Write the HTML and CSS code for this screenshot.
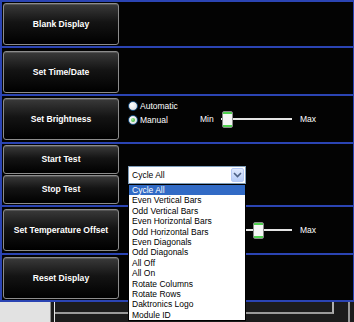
FILE: index.html
```html
<!DOCTYPE html>
<html lang="en">
<head>
    <meta charset="UTF-8">
    <title>Display Control</title>
    <link rel="stylesheet" href="styles.css">
</head>
<body>
    <div class="panel">
        <!-- Blank -->
        <div class="row r1">
            <button class="btn">Blank Display</button>
        </div>

        <!-- Time -->
        <div class="row r2">
            <button class="btn">Set Time/Date</button>
        </div>

        <!-- Brightness -->
        <div class="row r3">
            <button class="btn">Set Brightness</button>
            <div class="radios">
                <label class="radio"><span class="dot"></span>Automatic</label>
                <label class="radio"><span class="dot on"></span>Manual</label>
            </div>
            <div class="range">
                <span class="min">Min</span>
                <div class="slider"><span class="thumb" style="left: 1px"></span></div>
                <span class="max">Max</span>
            </div>
        </div>

        <!-- Test -->
        <div class="row r4">
            <div class="btn-stack">
                <button class="btn small">Start Test</button>
                <button class="btn small">Stop Test</button>
            </div>
            <div class="combo">
                <div class="combo-box">
                    <span class="combo-text">Cycle All</span>
                    <span class="combo-arrow">
                        <svg width="9" height="6" viewBox="0 0 9 6"><path d="M1 1 L4.5 4.5 L8 1" fill="none" stroke="#4d6185" stroke-width="1.6"/></svg>
                    </span>
                </div>
                <ul class="combo-list">
                    <li class="sel">Cycle All</li>
                    <li>Even Vertical Bars</li>
                    <li>Odd Vertical Bars</li>
                    <li>Even Horizontal Bars</li>
                    <li>Odd Horizontal Bars</li>
                    <li>Even Diagonals</li>
                    <li>Odd Diagonals</li>
                    <li>All Off</li>
                    <li>All On</li>
                    <li>Rotate Columns</li>
                    <li>Rotate Rows</li>
                    <li>Daktronics Logo</li>
                    <li>Module ID</li>
                </ul>
            </div>
        </div>

        <!-- Temperature -->
        <div class="row r5">
            <button class="btn">Set Temperature Offset</button>
            <div class="range spaced">
                <span class="min">Min</span>
                <div class="slider"><span class="thumb" style="left: 32px"></span></div>
                <span class="max">Max</span>
            </div>
        </div>

        <!-- Reset -->
        <div class="row r6">
            <button class="btn">Reset Display</button>
        </div>
    </div>

    <div class="statusbar">
        <div class="status-left"></div>
        <div class="status-grid">
            <div class="cell wide"></div>
            <div class="cell narrow"></div>
        </div>
    </div>
</body>
</html>
```

FILE: styles.css
```css
body {
    margin: 0;
    background-color: #1c1c1c;
    font-family: "Liberation Sans", Arial, sans-serif;
    font-size: 8.5px;
    color: white;
    width: 354px;
    height: 322px;
    overflow: hidden;
}
.panel {
    width: 354px;
    box-sizing: border-box;
    background-color: #030303;
    border: 2px solid #2b44b3;
    border-bottom: none;
    border-right-width: 1px;
}
.row {
    display: flex;
    align-items: center;
    border-bottom: 2px solid #2b44b3;
    padding-left: 1px;
    box-sizing: border-box;
}
.r1 { height: 46px; }
.r2 { height: 48px; padding-top: 1px; }
.r3 { height: 48px; }
.r4 { height: 63px; }
.r5 { height: 48px; }
.r6 { height: 47px; padding-top: 1px; }

.btn {
    width: 116px;
    height: 42px;
    margin: 0;
    padding: 0;
    border: 1px solid #8c8c8c;
    border-radius: 3px;
    background: linear-gradient(#3a3a3a, #141414 45%, #000 100%);
    box-shadow: inset 0 1px 0 #555;
    color: white;
    font-family: "Liberation Sans", Arial, sans-serif;
    font-size: 8.6px;
    font-weight: bold;
    cursor: pointer;
}
.btn-stack {
    display: flex;
    flex-direction: column;
    gap: 1px;
    margin-top: -1px;
}
.btn.small {
    height: 29px;
}

/* radios */
.radios {
    align-self: flex-start;
    display: flex;
    flex-direction: column;
    gap: 3.5px;
    width: 72px;
    margin-left: 9px;
    margin-top: 5px;
}
.radio {
    display: flex;
    align-items: center;
    gap: 2px;
    height: 10px;
}
.dot {
    width: 8px;
    height: 8px;
    border: 1px solid #1c5180;
    border-radius: 50%;
    background: radial-gradient(circle at 35% 35%, #ffffff, #d4d6dc);
    display: inline-block;
    position: relative;
}
.dot.on::after {
    content: "";
    position: absolute;
    left: 2px;
    top: 2px;
    width: 4px;
    height: 4px;
    border-radius: 50%;
    background: radial-gradient(circle at 35% 35%, #a6f3a0, #21a121);
}

/* sliders */
.range {
    display: flex;
    align-items: center;
}
.range.spaced {
    margin-left: 81px;
}
.min {
    width: 21px;
}
.slider {
    position: relative;
    width: 71px;
    height: 17px;
    margin-right: 8px;
}
.slider::before {
    content: "";
    position: absolute;
    left: 0;
    right: 0;
    top: 7px;
    height: 2px;
    background-color: #e4e4e4;
}
.thumb {
    position: absolute;
    top: 0;
    width: 9px;
    height: 15px;
    border: 1px solid #8a8a8a;
    border-radius: 2px;
    background: linear-gradient(#4fd14f 0, #4fd14f 2px, #f6f6f6 2px, #f6f6f6 13px, #4fd14f 13px);
}

/* combo */
.combo {
    position: relative;
    width: 118px;
    margin-left: 9px;
    margin-top: 1px;
    z-index: 10;
    color: black;
}
.combo-box {
    display: flex;
    align-items: center;
    height: 18px;
    box-sizing: border-box;
    border: 1px solid #7f9db9;
    background-color: white;
    padding: 0 1px 0 3px;
}
.combo-text {
    flex: 1;
}
.combo-arrow {
    width: 13px;
    height: 14px;
    border-radius: 2px;
    border: 1px solid #b5c9f5;
    box-sizing: border-box;
    background: linear-gradient(#dfe9fd, #b7cdf7);
    display: flex;
    align-items: center;
    justify-content: center;
}
.combo-list {
    position: absolute;
    top: 100%;
    left: 0;
    width: 118px;
    box-sizing: border-box;
    margin: 0;
    padding: 0;
    list-style: none;
    background-color: white;
    border: 1px solid #000;
}
.combo-list li {
    height: 10.4px;
    line-height: 10.4px;
    padding-left: 3px;
    white-space: nowrap;
}
.combo-list li.sel {
    background-color: #316ac5;
    color: white;
}

/* bottom strip */
.statusbar {
    display: flex;
    height: 20px;
}
.status-left {
    width: 50px;
    background-color: #e2e2e2;
    border-right: 1px solid #8e8e8e;
    margin-right: 3px;
}
.status-grid {
    flex: 1;
    display: flex;
    background-color: #1c1c1c;
    border-left: 1px solid #e6e6e6;
}
.cell.wide {
    width: 277px;
    height: 10px;
    border-bottom: 2px solid #9a9a9a;
    border-right: 2px solid #b0b0b0;
}
.cell.narrow {
    width: 14px;
    border-right: 2px solid #9a9a9a;
}
```
